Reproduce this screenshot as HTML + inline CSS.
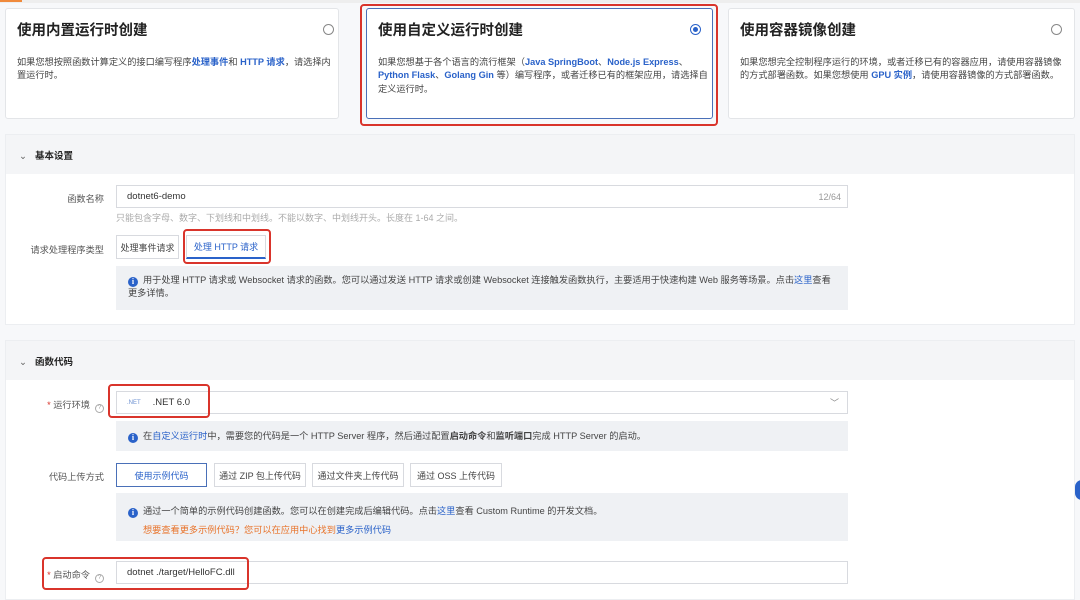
<!DOCTYPE html>
<html><head><meta charset="utf-8"><style>
*{box-sizing:border-box;margin:0;padding:0}
body{width:1080px;height:591px;overflow:hidden;background:#f7f8fa;font-family:"Liberation Sans","Noto Sans CJK SC",sans-serif;color:#333;position:relative}
.a{position:absolute}
.card{background:#fff;border:1px solid #e3e5e8;border-radius:3px}
.t{font-size:14.5px;font-weight:bold;color:#222}
.d{font-size:9.2px;line-height:13.3px;color:#444}
.b{color:#2a62c9;font-weight:bold}
.l{color:#2a62c9}
.radio{width:11px;height:11px;border:1px solid #888;border-radius:50%}
.red{border:2px solid #d9342b;border-radius:4px}
.sec{background:#fff;border:1px solid #eceef1}
.hd{background:#f4f5f7;height:39px;font-size:9.5px;font-weight:bold;color:#222}
.lab{font-size:9.2px;color:#555;text-align:right;width:104px}
.inp{background:#fff;border:1px solid #d8dadf;font-size:9.5px;color:#333;padding-left:10px;display:flex;align-items:center}
.info{background:#eff1f4;font-size:9.2px;color:#444;line-height:13px}
.ic{display:inline-block;width:10px;height:10px;border-radius:50%;background:#2a62c9;color:#fff;font-size:8px;text-align:center;line-height:10px;font-weight:bold;font-family:"Liberation Serif",serif;vertical-align:-1px;margin-right:5px}
.btn{border:1px solid #d8dadf;background:#fff;font-size:9px;color:#444;display:flex;align-items:center;justify-content:center}
.q{display:inline-block;width:9px;height:9px;border:1px solid #aaa;border-radius:50%;font-size:6px;line-height:7px;text-align:center;color:#999;margin-left:5px;vertical-align:-1px}
</style></head><body>
<div class="a" style="left:0;top:0;width:1080px;height:3px;background:#eee"></div>
<div class="a" style="left:0;top:0;width:22px;height:2px;background:#f08a3c"></div>

<div class="a card" style="left:5px;top:8px;width:334px;height:111px">
 <div class="a t" style="left:11px;top:10px">使用内置运行时创建</div>
 <div class="a radio" style="left:317px;top:15px"></div>
 <div class="a d" style="left:11px;top:47px;width:314px">如果您想按照函数计算定义的接口编写程序<span class="b">处理事件</span>和 <span class="b">HTTP 请求</span>，请选择内置运行时。</div>
</div>
<div class="a red" style="left:360px;top:4px;width:358px;height:122px"></div>
<div class="a card" style="left:366px;top:8px;width:347px;height:111px;border-color:#4a70b8">
 <div class="a t" style="left:11px;top:10px">使用自定义运行时创建</div>
 <div class="a radio" style="left:323px;top:15px;border-color:#2a62c9;padding:2px"><div style="width:5px;height:5px;border-radius:50%;background:#2a62c9"></div></div>
 <div class="a d" style="left:11px;top:47px;width:330px">如果您想基于各个语言的流行框架（<span class="b">Java SpringBoot</span>、<span class="b">Node.js Express</span>、<span class="b">Python Flask</span>、<span class="b">Golang Gin</span> 等）编写程序，或者迁移已有的框架应用，请选择自定义运行时。</div>
</div>
<div class="a card" style="left:728px;top:8px;width:347px;height:111px">
 <div class="a t" style="left:11px;top:10px">使用容器镜像创建</div>
 <div class="a radio" style="left:322px;top:15px"></div>
 <div class="a d" style="left:11px;top:47px;width:330px">如果您想完全控制程序运行的环境，或者迁移已有的容器应用，请使用容器镜像的方式部署函数。如果您想使用 <span class="b">GPU 实例</span>，请使用容器镜像的方式部署函数。</div>
</div>

<div class="a sec" style="left:5px;top:134px;width:1070px;height:191px">
 <div class="hd" style="padding:13px 0 0 13px"><span style="font-weight:normal;color:#666;margin-right:8px">⌄</span>基本设置</div>
</div>
<div class="a lab" style="left:0;top:191px">函数名称</div>
<div class="a inp" style="left:116px;top:185px;width:732px;height:23px">dotnet6-demo<span style="margin-left:auto;margin-right:6px;color:#999;font-size:9px">12/64</span></div>
<div class="a" style="left:116px;top:211px;font-size:9px;color:#aaa">只能包含字母、数字、下划线和中划线。不能以数字、中划线开头。长度在 1-64 之间。</div>
<div class="a lab" style="left:0;top:242px">请求处理程序类型</div>
<div class="a btn" style="left:116px;top:235px;width:63px;height:24px">处理事件请求</div>
<div class="a btn" style="left:186px;top:235px;width:80px;height:24px;color:#2a62c9;border-bottom:2px solid #2a62c9">处理 HTTP 请求</div>
<div class="a red" style="left:183px;top:229px;width:88px;height:35px"></div>
<div class="a info" style="left:116px;top:266px;width:732px;height:44px;padding:8px 12px 0 12px"><span class="ic">i</span>用于处理 HTTP 请求或 Websocket 请求的函数。您可以通过发送 HTTP 请求或创建 Websocket 连接触发函数执行，主要适用于快速构建 Web 服务等场景。点击<span class="l">这里</span>查看更多详情。</div>

<div class="a sec" style="left:5px;top:340px;width:1070px;height:260px">
 <div class="hd" style="padding:13px 0 0 13px"><span style="font-weight:normal;color:#666;margin-right:8px">⌄</span>函数代码</div>
</div>
<div class="a lab" style="left:0;top:397px"><span style="color:#d9342b">*</span> 运行环境<span class="q">?</span></div>
<div class="a inp" style="left:116px;top:391px;width:732px;height:23px"><span style="font-size:6px;color:#6a8fd0;margin-right:12px">.NET</span>.NET 6.0<span style="margin-left:auto;margin-right:8px;color:#888;font-size:9px">﹀</span></div>
<div class="a red" style="left:108px;top:384px;width:102px;height:34px"></div>
<div class="a info" style="left:116px;top:421px;width:732px;height:30px;padding:9px 12px 0 12px"><span class="ic">i</span>在<span class="l">自定义运行时</span>中，需要您的代码是一个 HTTP Server 程序，然后通过配置<b>启动命令</b>和<b>监听端口</b>完成 HTTP Server 的启动。</div>
<div class="a lab" style="left:0;top:469px">代码上传方式</div>
<div class="a btn" style="left:116px;top:463px;width:91px;height:24px;border-color:#4a70b8;color:#2a62c9">使用示例代码</div>
<div class="a btn" style="left:214px;top:463px;width:92px;height:24px">通过 ZIP 包上传代码</div>
<div class="a btn" style="left:312px;top:463px;width:92px;height:24px">通过文件夹上传代码</div>
<div class="a btn" style="left:410px;top:463px;width:92px;height:24px">通过 OSS 上传代码</div>
<div class="a info" style="left:116px;top:493px;width:732px;height:48px;padding:9px 12px 0 12px;line-height:19px"><span class="ic">i</span>通过一个简单的示例代码创建函数。您可以在创建完成后编辑代码。点击<span class="l">这里</span>查看 Custom Runtime 的开发文档。<br><span style="margin-left:15px;color:#e8732a">想要查看更多示例代码？您可以在应用中心找到</span><span class="l">更多示例代码</span></div>
<div class="a lab" style="left:0;top:567px"><span style="color:#d9342b">*</span> 启动命令<span class="q">?</span></div>
<div class="a inp" style="left:116px;top:561px;width:732px;height:23px">dotnet ./target/HelloFC.dll</div>
<div class="a red" style="left:42px;top:557px;width:207px;height:33px"></div>
<div class="a" style="left:1075px;top:480px;width:14px;height:20px;border-radius:10px;background:#2a62c9"></div>
</body></html>
